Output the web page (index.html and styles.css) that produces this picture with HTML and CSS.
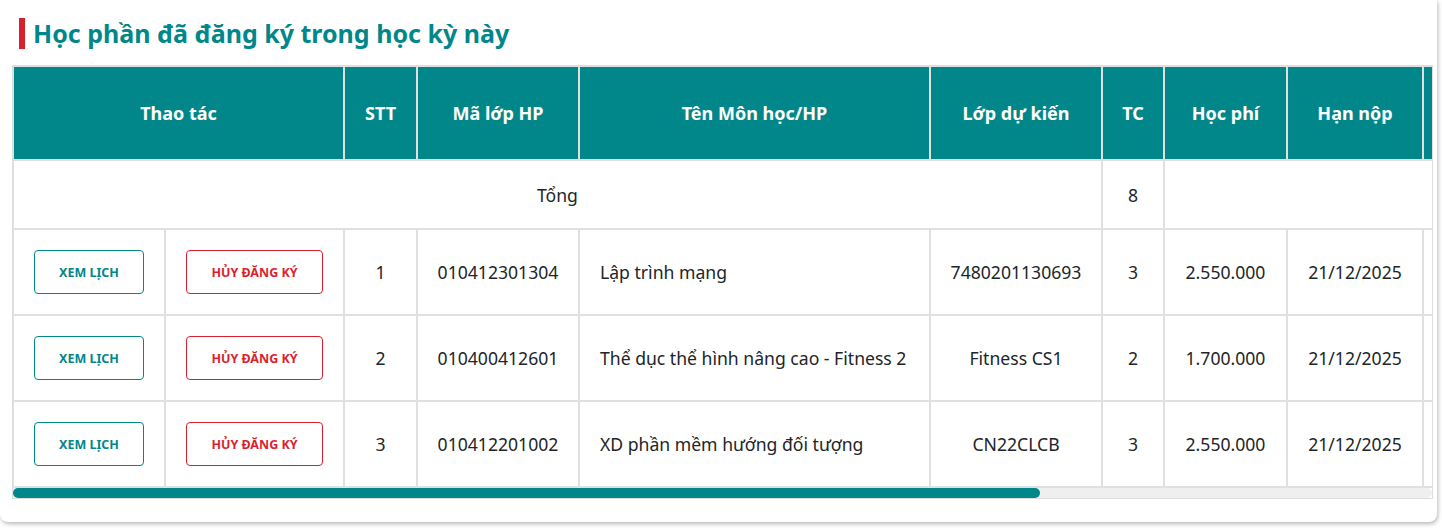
FILE: index.html
```html
<!DOCTYPE html>
<html lang="vi">
<head>
<meta charset="utf-8">
<title>Học phần đã đăng ký</title>
<link rel="stylesheet" href="styles.css">
</head>
<body>
<div class="card">
  <h2 class="section-title">Học phần đã đăng ký trong học kỳ này</h2>
  <div class="table-wrap">
    <div class="table-viewport">
      <table class="reg-table">
        <colgroup>
          <col class="c-view"><col class="c-cancel"><col class="c-stt"><col class="c-code"><col class="c-name"><col class="c-class"><col class="c-tc"><col class="c-fee"><col class="c-due"><col class="c-extra"><col class="c-extra">
        </colgroup>
        <thead>
          <tr>
            <th colspan="2">Thao tác</th>
            <th>STT</th>
            <th>Mã lớp HP</th>
            <th>Tên Môn học/HP</th>
            <th>Lớp dự kiến</th>
            <th>TC</th>
            <th>Học phí</th>
            <th>Hạn nộp</th>
            <th></th>
            <th></th>
          </tr>
        </thead>
        <tbody>
          <tr class="total-row">
            <td colspan="6">Tổng</td>
            <td>8</td>
            <td colspan="4" class="blank"></td>
          </tr>
          <tr>
            <td><button class="btn btn-view">XEM LỊCH</button></td>
            <td><button class="btn btn-cancel">HỦY ĐĂNG KÝ</button></td>
            <td>1</td>
            <td>010412301304</td>
            <td class="left">Lập trình mạng</td>
            <td>7480201130693</td>
            <td>3</td>
            <td>2.550.000</td>
            <td>21/12/2025</td>
            <td></td>
            <td></td>
          </tr>
          <tr>
            <td><button class="btn btn-view">XEM LỊCH</button></td>
            <td><button class="btn btn-cancel">HỦY ĐĂNG KÝ</button></td>
            <td>2</td>
            <td>010400412601</td>
            <td class="left">Thể dục thể hình nâng cao - Fitness 2</td>
            <td>Fitness CS1</td>
            <td>2</td>
            <td>1.700.000</td>
            <td>21/12/2025</td>
            <td></td>
            <td></td>
          </tr>
          <tr>
            <td><button class="btn btn-view">XEM LỊCH</button></td>
            <td><button class="btn btn-cancel">HỦY ĐĂNG KÝ</button></td>
            <td>3</td>
            <td>010412201002</td>
            <td class="left">XD phần mềm hướng đối tượng</td>
            <td>CN22CLCB</td>
            <td>3</td>
            <td>2.550.000</td>
            <td>21/12/2025</td>
            <td></td>
            <td></td>
          </tr>
        </tbody>
      </table>
    </div>
    <div class="hscroll"><div class="hscroll-thumb"></div></div>
  </div>
</div>
</body>
</html>
```
FILE: styles.css
```css
* { box-sizing: border-box; }
html, body { margin: 0; padding: 0; background: #ffffff; }
body {
  font-family: "Noto Sans", "Open Sans", sans-serif;
  color: #212529;
  width: 1442px;
  height: 528px;
  overflow: hidden;
}
.card {
  width: 1437px;
  background: #fff;
  border-radius: 0 0 8px 8px;
  box-shadow: 1px 2px 4px rgba(0, 0, 0, 0.28);
  padding: 18px 4px 23px 12px;
}
.section-title {
  margin: 0 0 16px 7px;
  border-left: 6px solid #d71f2d;
  padding-left: 8px;
  font-size: 25px;
  line-height: 31px;
  font-weight: 700;
  color: #01878a;
}
.table-wrap {
  border: 1px solid #dddddd;
}
.table-viewport {
  overflow: hidden;
}
.hscroll {
  height: 10px;
  background: #efefef;
  border-radius: 0 5px 5px 0;
}
.hscroll-thumb {
  width: 1027px;
  height: 10px;
  background: #01878a;
  border-radius: 5px;
}
.reg-table {
  table-layout: fixed;
  width: 1961px;
  border-collapse: separate;
  border-spacing: 0;
  border-left: 1px solid #e0e0e0;
  border-top: 1px solid #e0e0e0;
  font-size: 17.6px;
}
.c-view { width: 152px; }
.c-cancel { width: 179px; }
.c-stt { width: 73px; }
.c-code { width: 162px; }
.c-name { width: 351px; }
.c-class { width: 172px; }
.c-tc { width: 62px; }
.c-fee { width: 123px; }
.c-due { width: 136px; }
.c-extra { width: 275px; }
.reg-table th,
.reg-table td {
  border-right: 2px solid #e0e0e0;
  border-bottom: 2px solid #e0e0e0;
  text-align: center;
  vertical-align: middle;
  padding: 0 6px;
  white-space: nowrap;
}
.reg-table th {
  background: #01878a;
  color: #fff;
  font-weight: 700;
  font-size: 18px;
  height: 94px;
}
.reg-table td { height: 86px; }
.reg-table .total-row td { height: 69px; }
.reg-table td.left { text-align: left; padding-left: 20px; }
.reg-table td.blank { border-right: none; }
.btn {
  font-family: "Noto Sans", "Open Sans", sans-serif;
  font-size: 12.5px;
  font-weight: 700;
  background: #fff;
  border-radius: 4px;
  height: 44px;
  cursor: pointer;
  padding: 0;
}
.btn-view {
  width: 110px;
  border: 1px solid #01878a;
  color: #01878a;
}
.btn-cancel {
  width: 137px;
  border: 1px solid #dc1f2e;
  color: #dc1f2e;
}
```
